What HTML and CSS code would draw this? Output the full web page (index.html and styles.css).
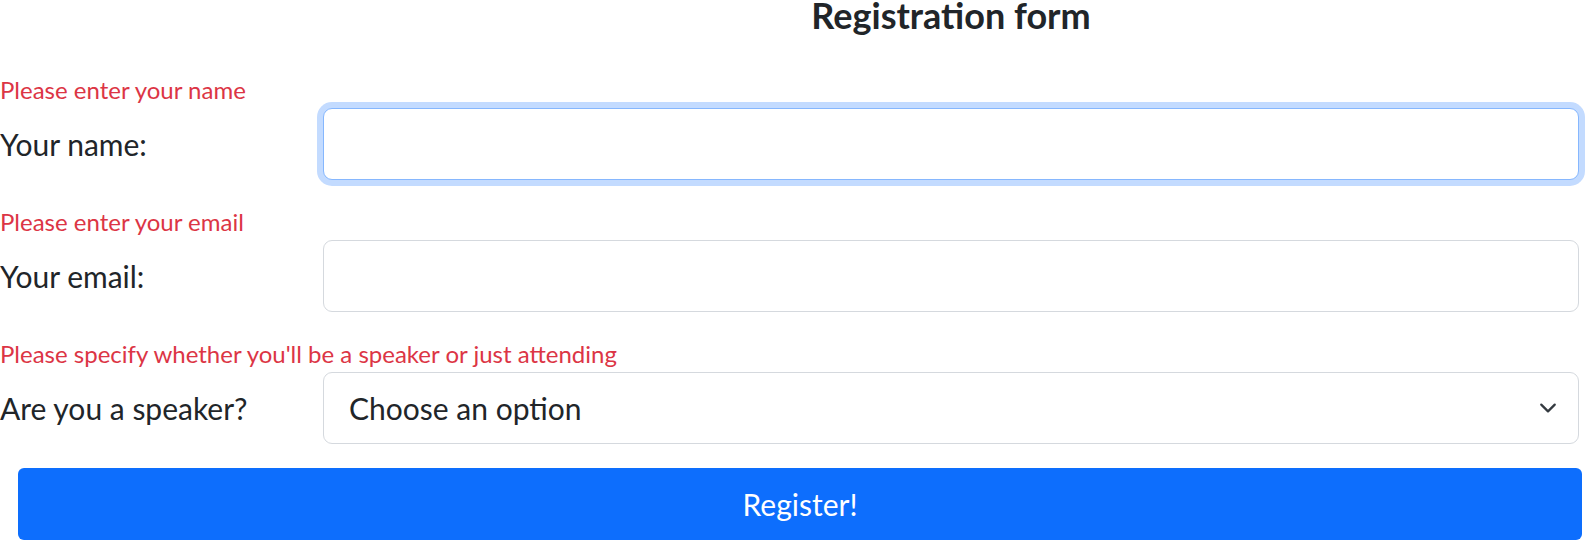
FILE: index.html
```html
<!DOCTYPE html>
<html lang="en">
<head>
<meta charset="utf-8">
<title>Registration form</title>
<link rel="stylesheet" href="styles.css">
</head>
<body>
<main class="page">
  <div class="title-row">
    <h4 class="title">Registration form</h4>
  </div>
  <form class="form">
    <div class="group">
      <div class="error">Please enter your name</div>
      <div class="field-row">
        <label class="label" for="name">Your name:</label>
        <input class="control control-focus" id="name" type="text">
      </div>
    </div>
    <div class="group">
      <div class="error">Please enter your email</div>
      <div class="field-row">
        <label class="label" for="email">Your email:</label>
        <input class="control" id="email" type="email">
      </div>
    </div>
    <div class="group">
      <div class="error">Please specify whether you'll be a speaker or just attending</div>
      <div class="field-row">
        <label class="label" for="speaker">Are you a speaker?</label>
        <div class="select-wrap">
          <select class="control select" id="speaker">
            <option>Choose an option</option>
            <option>Yes</option>
            <option>No</option>
          </select>
          <svg class="chevron" width="24" height="18" viewBox="0 0 16 16" aria-hidden="true">
            <path d="m2 5 6 6 6-6" fill="none" stroke="#343a40" stroke-width="2" stroke-linecap="round" stroke-linejoin="round"/>
          </svg>
        </div>
      </div>
    </div>
    <button class="submit" type="button">Register!</button>
  </form>
</main>
</body>
</html>
```
FILE: styles.css
```css
* { box-sizing: border-box; }

body {
  margin: 0;
  font-family: "Lato", "Liberation Sans", sans-serif;
  color: #212529;
  background: #fff;
}

.page {
  width: 1596px;
}

.title-row {
  display: grid;
  grid-template-columns: 323px 1256px;
  margin-bottom: 42px;
}

.title {
  grid-column: 2;
  margin: 0;
  font-size: 36px;
  font-weight: 700;
  line-height: 30px;
  text-align: center;
}

.form {
  display: flex;
  flex-direction: column;
  gap: 24px;
}

.error {
  color: #dc3545;
  font-size: 24px;
  line-height: 36px;
}

.field-row {
  display: grid;
  grid-template-columns: 323px 1256px;
  align-items: center;
}

.label {
  font-size: 30px;
  line-height: 45px;
}

.control {
  display: block;
  width: 100%;
  height: 72px;
  padding: 0 24px;
  font-family: inherit;
  font-size: 30px;
  color: #212529;
  background: #fff;
  border: 1px solid #d5d9de;
  border-radius: 9px;
  outline: none;
}

.control-focus {
  border-color: #86b7fe;
  box-shadow: 0 0 0 6px #c3dbff;
}

.select-wrap {
  position: relative;
}

.select {
  appearance: none;
  -webkit-appearance: none;
  padding-left: 25px;
  padding-right: 72px;
}

.chevron {
  position: absolute;
  right: 19px;
  top: 27px;
  pointer-events: none;
}

.submit {
  margin-left: 18px;
  width: 1564px;
  height: 72px;
  font-family: inherit;
  font-size: 30px;
  color: #fff;
  background: #0d6efd;
  border: none;
  border-radius: 6px;
}
```
